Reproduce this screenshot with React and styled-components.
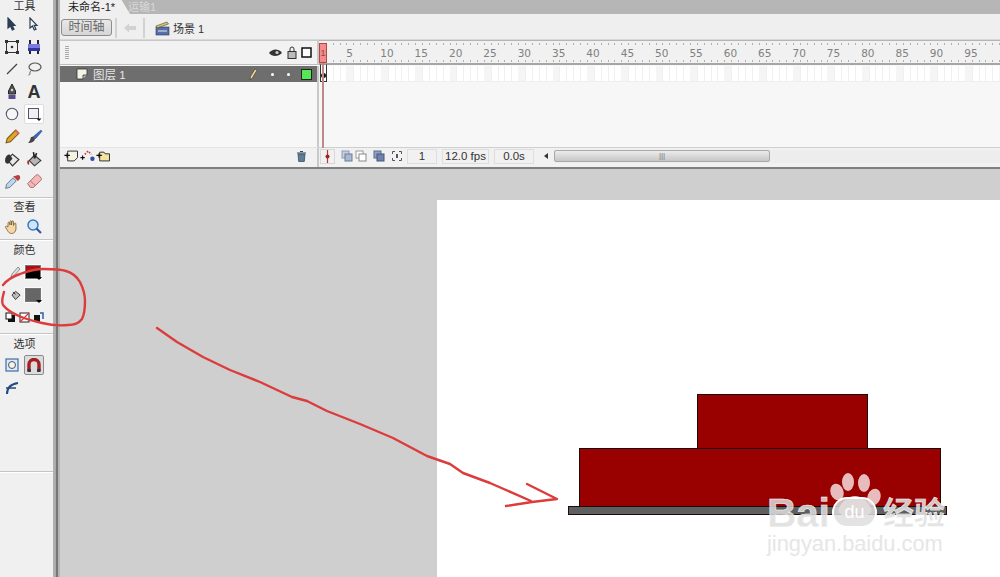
import React from "react"
import styled, { createGlobalStyle } from "styled-components"

const GlobalStyle = createGlobalStyle`
  html, body {
    margin: 0;
    padding: 0;
    background: #cfcfcf;
  }
  body {
    font-family: "Liberation Sans", "Noto Sans CJK SC", sans-serif;
    overflow: hidden;
  }
`

const Page = styled.div`
  position: relative;
  display: flex;
  width: 1000px;
  height: 577px;
  overflow: hidden;
`

const ToolBar = styled.div`
  width: 53px;
  flex: none;
  background: #f0f0f0;
  display: flex;
  flex-direction: column;
`

const Splitter = styled.div`
  width: 7px;
  flex: none;
  background: linear-gradient(90deg, #b3b3b3 0, #a8a8a8 3px, #767676 3px, #767676 5px, #b4b4b4 5px);
`

const ToolTitle = styled.div`
  height: ${props => props.$h}px;
  padding-right: 4px;
  font-size: 11px;
  line-height: ${props => props.$h}px;
  text-align: center;
  color: #333;
`

const ToolGrid = styled.div`
  display: grid;
  grid-template-columns: 22px 22px;
  grid-auto-rows: ${props => props.$rowH || 22.5}px;
  padding-left: 1px;
  justify-items: center;
  align-items: center;
`

const ToolSep = styled.div`
  height: 2px;
  margin-top: ${props => props.$mt || 0}px;
  background: linear-gradient(#c4c4c4 50%, #fff 50%);
`

const ToolSlot = styled.div`
  width: 20px;
  height: 20px;
  display: flex;
  align-items: center;
  justify-content: center;
  box-sizing: border-box;
  border-radius: 2px;
  background: ${props => (props.$pressed ? "#dcdcdc" : props.$active ? "#fff" : "transparent")};
  border: 1px solid ${props => (props.$pressed ? "#8b8b8b" : props.$active ? "#ddd" : "transparent")};
`

const TextTool = styled.span`
  font-size: 18px;
  font-weight: 700;
  line-height: 16px;
  color: #333;
`

const ColorRow = styled.div`
  height: ${props => props.$h}px;
  display: flex;
  align-items: center;
  gap: ${props => props.$gap || 4}px;
  padding-left: ${props => props.$pl || 9}px;
`

const Swatch = styled.div`
  position: relative;
  width: 16px;
  height: 14px;
  box-sizing: border-box;
  border: 1px solid #777;
  box-shadow: 0 0 0 1px #fafafa;
  background: ${props => props.$fill};
  &::after {
    content: "";
    position: absolute;
    right: -2px;
    bottom: -2px;
    border: 3px solid transparent;
    border-top: 3px solid #000;
    border-bottom: 0;
  }
`

const Main = styled.div`
  flex: 1;
  display: flex;
  flex-direction: column;
  min-width: 0;
`

const TabBar = styled.div`
  height: 14px;
  flex: none;
  background: #b6b6b6;
  display: flex;
  overflow: hidden;
`

const ActiveTab = styled.div`
  width: 56px;
  padding: 0 6px 0 8px;
  font-size: 11px;
  line-height: 14px;
  color: #222;
  background: #efefef;
  clip-path: polygon(0 0, 88% 0, 100% 100%, 0 100%);
`

const OtherTab = styled.div`
  margin-left: -2px;
  font-size: 11px;
  line-height: 14px;
  color: #d8d8d8;
`

const EditBar = styled.div`
  height: 26px;
  flex: none;
  background: #efefef;
  display: flex;
  align-items: center;
  padding: 2px 0 0 1px;
  border-bottom: 1px solid #d8d8d8;
  box-sizing: border-box;
`

const TimelineButton = styled.div`
  width: 51px;
  height: 17px;
  box-sizing: border-box;
  border: 1px solid #8c8c8c;
  border-radius: 3px;
  background: linear-gradient(#e8e8e8, #d6d6d6);
  color: #666;
  font-size: 12px;
  line-height: 15px;
  text-align: center;
`

const BarSep = styled.div`
  width: 2px;
  height: 20px;
  margin: 0 ${props => props.$mx || 6}px;
  background: #d2d2d2;
`

const BackArrow = styled.svg`
  margin-left: 3px;
`

const Clapper = styled.svg`
  margin-left: 4px;
`

const SceneLabel = styled.span`
  font-size: 11px;
  color: #333;
  margin-left: 3px;
`

const Timeline = styled.div`
  height: 127px;
  flex: none;
  display: grid;
  grid-template-columns: 259px 1fr;
  grid-template-rows: 25px 17px 1fr 20px;
  background: #f7f7f7;
  border-bottom: 2px solid #7f7f7f;
  box-sizing: content-box;
`

const LayerHead = styled.div`
  background: #f2f2f2;
  border-top: 1px solid #c8c8c8;
  border-bottom: 1px solid #bdbdbd;
  border-right: 2px solid #c9c9c9;
  box-sizing: border-box;
  display: flex;
  align-items: center;
  justify-content: flex-end;
  padding: 0 5px 0 5px;
  gap: 4px;
`

const Grip = styled.div`
  width: 4px;
  height: 14px;
  margin-right: auto;
  background: repeating-linear-gradient(#aaa 0 1px, transparent 1px 2px);
`

const LayerRow = styled.div`
  margin-top: 1px;
  background: #6e6e6e;
  border-right: 2px solid #c9c9c9;
  display: flex;
  align-items: center;
  padding: 0 5px 0 16px;
  color: #e6e6e6;
  font-size: 11.5px;
`

const LayerName = styled.span`
  margin-left: 5px;
  margin-right: auto;
`

const LayerDot = styled.span`
  width: 3px;
  height: 3px;
  margin-left: 13px;
  border-radius: 50%;
  background: #fff;
`

const LayerColor = styled.span`
  width: 9px;
  height: 9px;
  margin-left: 11px;
  border: 1px solid #222;
  background: #55e655;
`

const Ruler = styled.div`
  position: relative;
  background: #f1f1f1;
  border-top: 1px solid #b4b4b4;
  border-bottom: 2px solid #a6a6a6;
  box-sizing: border-box;
  overflow: hidden;
  &::before,
  &::after {
    content: "";
    position: absolute;
    left: 0;
    right: 0;
    height: 2px;
    background: repeating-linear-gradient(90deg, #b0b0b0 0 1px, transparent 1px 6.87px);
  }
  &::before {
    top: 2px;
  }
  &::after {
    bottom: 1px;
  }
`

const RulerNum = styled.span`
  position: absolute;
  top: 5px;
  width: 24px;
  margin-left: -12px;
  text-align: center;
  font-family: "DejaVu Sans", sans-serif;
  font-size: 10.5px;
  line-height: 14px;
  color: #808080;
`

const Playhead = styled.div`
  position: absolute;
  left: 319px;
  top: 43px;
  width: 8px;
  height: 20px;
  box-sizing: border-box;
  background: #f58b8b;
  border: 1px solid #b04848;
  color: #8a4a4a;
  font-size: 9px;
  line-height: 18px;
  text-align: center;
`

const PlayLine = styled.div`
  position: absolute;
  left: 322px;
  top: 63px;
  width: 2px;
  height: 85px;
  background: #bd8a8a;
`

const Frames = styled.div`
  position: relative;
  margin-top: 1px;
  background-color: #fff;
  background-image:
    repeating-linear-gradient(90deg, transparent 0 27.48px, #f5f5f5 27.48px 34.35px),
    repeating-linear-gradient(90deg, #f0f0f0 0 1px, transparent 1px 6.87px);
  border-bottom: 1px solid #efefef;
  box-sizing: border-box;
`

const KeyFrame = styled.div`
  position: absolute;
  left: 1px;
  top: -2px;
  width: 7px;
  height: 18px;
  box-sizing: border-box;
  border: 1px solid #333;
  border-top-color: #999;
  background: #fff;
  &::after {
    content: "";
    position: absolute;
    left: 0;
    bottom: 3px;
    width: 5px;
    height: 5px;
    border-radius: 50%;
    background: #111;
  }
`

const EmptyLeft = styled.div`
  background: #f7f7f7;
  border-right: 2px solid #c9c9c9;
`

const EmptyRight = styled.div`
  background: #f7f7f7;
`

const LayerTools = styled.div`
  background: #f1f1f1;
  border-top: 1px solid #e4e4e4;
  border-right: 2px solid #c9c9c9;
  display: flex;
  align-items: center;
  padding: 0 10px 3px 4px;
  gap: 1px;
`

const FrameTools = styled.div`
  background: #f1f1f1;
  border-top: 1px solid #cfcfcf;
  display: flex;
  align-items: center;
  padding: 0 0 3px 1px;
  font-size: 11.5px;
  color: #333;
`

const ToolPush = styled.div`
  margin-left: auto;
  display: flex;
`

const FrameIcon = styled.div`
  width: 15px;
  height: 15px;
  flex: none;
  display: flex;
  align-items: center;
  justify-content: center;
  box-sizing: border-box;
  margin-left: ${props => props.$ml || 0}px;
  border: 1px solid ${props => (props.$boxed ? "#d8d8d8" : "transparent")};
`

const Counter = styled.div`
  width: ${props => props.$w}px;
  height: 15px;
  flex: none;
  box-sizing: border-box;
  margin-left: ${props => props.$ml}px;
  border: 1px solid #dedede;
  line-height: 13px;
  text-align: center;
`

const ScrollArrow = styled.div`
  width: 0;
  height: 0;
  margin: 0 6px 0 10px;
  border: 3px solid transparent;
  border-left: 0;
  border-right: 4px solid #333;
`

const ScrollTrack = styled.div`
  flex: 1;
  height: 13px;
  background: #ededed;
`

const ScrollThumb = styled.div`
  width: 216px;
  height: 12px;
  box-sizing: border-box;
  border: 1px solid #a8a8a8;
  border-radius: 2px;
  background: linear-gradient(#ececec, #c6c6c6);
  display: flex;
  align-items: center;
  justify-content: center;
  color: #777;
  font-size: 8px;
  line-height: 8px;
`

const Workspace = styled.div`
  position: relative;
  flex: 1;
  background: #cfcfcf;
  overflow: hidden;
`

const Stage = styled.div`
  position: absolute;
  left: 377px;
  top: 31px;
  right: 0;
  bottom: 0;
  background: #fff;
`

const Shape = styled.div`
  position: absolute;
  left: ${props => props.$x}px;
  top: ${props => props.$y}px;
  width: ${props => props.$w}px;
  height: ${props => props.$h}px;
  box-sizing: border-box;
  border: 1px solid #1f0a0a;
  background: ${props => props.$fill};
`

const Overlay = styled.svg`
  position: absolute;
  left: 0;
  top: 0;
  pointer-events: none;
`

const Watermark = styled.div`
  position: absolute;
  left: 767px;
  top: 470px;
  width: 182px;
  height: 90px;
`

const WmPaw = styled.svg`
  position: absolute;
  left: 50px;
  top: 0;
`

const WmBai = styled.span`
  position: absolute;
  left: 0;
  top: 23px;
  font-size: 41px;
  line-height: 40px;
  font-weight: 700;
  letter-spacing: -0.5px;
  color: rgba(222, 222, 222, 0.85);
  -webkit-text-stroke: 0.5px #fff;
`

const WmDu = styled.span`
  position: absolute;
  left: 65px;
  top: 27px;
  width: 45px;
  height: 31px;
  border-radius: 15px;
  background: rgba(222, 222, 222, 0.85);
  border: 2px solid #fff;
  box-sizing: border-box;
  font-size: 18px;
  line-height: 27px;
  text-align: center;
  color: #fff;
`

const WmJing = styled.span`
  position: absolute;
  left: 116px;
  top: 29px;
  font-size: 31px;
  line-height: 30px;
  font-weight: 700;
  color: rgba(225, 225, 225, 0.9);
  -webkit-text-stroke: 0.4px #fff;
  white-space: nowrap;
`

const WmUrl = styled.span`
  position: absolute;
  left: 0;
  top: 62px;
  font-size: 21.8px;
  line-height: 24px;
  color: #e6e6e6;
  white-space: nowrap;
`

const Pointer = ({ solid }) => (
  <svg width="14" height="14" viewBox="0 0 14 14">
    <path
      d="M3 1v10l2.500-2 1.800 4 1.700-.8-1.800-3.800H10z"
      fill={solid ? "#2b3d55" : "#f5f5f5"}
      stroke="#2b3d55"
      strokeWidth="1.200"
    />
  </svg>
)

const tools = [
  <Pointer solid />,
  <Pointer />,
  <svg width="16" height="16" viewBox="0 0 16 16">
    <rect x="2.500" y="2.500" width="11" height="11" fill="none" stroke="#333" />
    <rect x="1" y="1" width="3" height="3" fill="#333" />
    <rect x="12" y="1" width="3" height="3" fill="#333" />
    <rect x="1" y="12" width="3" height="3" fill="#333" />
    <rect x="12" y="12" width="3" height="3" fill="#333" />
    <circle cx="8" cy="8" r="1.300" fill="#333" />
  </svg>,
  <svg width="16" height="16" viewBox="0 0 16 16">
    <rect x="2" y="5" width="12" height="7" fill="#7a7ae0" />
    <rect x="2" y="9" width="12" height="3" fill="#3535a0" />
    <path d="M4 1v4M12 1v4M4 12v3M12 12v3" stroke="#223" strokeWidth="2" />
  </svg>,
  <svg width="14" height="14" viewBox="0 0 14 14">
    <path d="M2 12L12 2" stroke="#444" strokeWidth="1.200" />
  </svg>,
  <svg width="16" height="16" viewBox="0 0 16 16">
    <ellipse cx="9" cy="6" rx="6" ry="4" fill="none" stroke="#555" strokeWidth="1.200" />
    <path d="M5.500 9.500c-1 .5-1.800 1.500-1.500 3 .2 1-.8 1.500-1.500 1.500" fill="none" stroke="#555" />
  </svg>,
  <svg width="14" height="17" viewBox="0 0 14 17">
    <path d="M7 1l3.500 7v3h-7V8z" fill="#555" stroke="#222" />
    <circle cx="7" cy="7" r="1.200" fill="#ddd" />
    <rect x="3.500" y="12" width="7" height="4" fill="#5a4a90" />
  </svg>,
  <TextTool>A</TextTool>,
  <svg width="16" height="16" viewBox="0 0 16 16">
    <circle cx="8" cy="8" r="5.700" fill="#f4f6f8" stroke="#556" strokeWidth="1.100" />
  </svg>,
  <svg width="16" height="16" viewBox="0 0 16 16">
    <rect x="2.500" y="2.500" width="10" height="10" fill="#eef0f4" stroke="#556" />
    <path d="M10.500 12.500h5l-2.500 2.500z" fill="#111" />
  </svg>,
  <svg width="17" height="17" viewBox="0 0 16 16">
    <path d="M2 14l1-4 8-8 3 3-8 8z" fill="#e2a62a" stroke="#7a5a1a" />
    <path d="M10 3l3 3 1.500-1.500-3-3z" fill="#e06a60" />
  </svg>,
  <svg width="17" height="17" viewBox="0 0 16 16">
    <path d="M14 2L7 8l2 2 6-7z" fill="#3a6ac8" stroke="#24447a" strokeWidth=".6" />
    <path d="M7 8c-2 0-3 1-3 3-.3 1-1 2-2 3 3 0 6-1 6.500-4z" fill="#444" />
  </svg>,
  <svg width="17" height="17" viewBox="0 0 16 16">
    <path d="M3 8l5-5 6 5-6 6z" fill="#e8e8e8" stroke="#333" strokeWidth="1.100" />
    <path d="M1 9c0-3 1-5 4-6l3 4-4 5c-2 0-3-1-3-3z" fill="#333" />
  </svg>,
  <svg width="17" height="17" viewBox="0 0 16 16">
    <path d="M3 9l5-5 6 5-6 5z" fill="#b5b5b5" stroke="#333" />
    <path d="M7 1l1 6M10 2L8 7" stroke="#222" strokeWidth="1.500" />
    <path d="M1.500 9c-1 2 0 4 1.500 4V9z" fill="#a33" />
  </svg>,
  <svg width="17" height="17" viewBox="0 0 16 16">
    <path d="M1.500 14.500l1-4 6-6 3 3-6 6z" fill="#bcd6ee" stroke="#5a6a80" strokeWidth=".8" />
    <path d="M8.500 3l4.500 4.500 1.500-1.500c1-1 1-2.500.2-3.500s-2.500-.8-3.500.2z" fill="#b84040" />
  </svg>,
  <svg width="17" height="17" viewBox="0 0 16 16">
    <path d="M1.500 10l8-8c.8-.7 1.500-.5 2.500.3l2 1.900c.8.900.8 1.800 0 2.600L7 13.500H4z" fill="#f5b8b8" stroke="#a66" strokeWidth=".9" />
    <path d="M4 7.500l4.500 4" stroke="#a66" strokeWidth=".8" />
  </svg>,
]

const frameNumbers = Array.from({ length: 19 }, (_, i) => (i + 1) * 5)

// the single digit 5 sits a little left of the even 34.35px step
const rulerLeft = i => (i === 0 ? 30.7 : 33.6 + i * 34.35)

function App() {
  return (
    <Page>
      <GlobalStyle />
      <ToolBar>
        <ToolTitle $h={13}>工具</ToolTitle>
        <ToolGrid>
          {tools.map((icon, i) => (
            <ToolSlot key={i} $active={i === 9}>
              {icon}
            </ToolSlot>
          ))}
        </ToolGrid>
        <ToolSep $mt={4} />
        <ToolTitle $h={17}>查看</ToolTitle>
        <ToolGrid $rowH={21}>
          <ToolSlot>
            <svg width="17" height="17" viewBox="0 0 17 17">
              <path
                d="M4 9V5c0-1 1.400-1 1.500 0l.5 2V3.500c0-1 1.500-1 1.500 0V7l.5-3.500c.1-1 1.500-.8 1.500.2V7.500l1-2c.4-.8 1.600-.4 1.400.5L12 11c-.5 3-2 4.500-4.500 4.500-2 0-3-1.200-4-3L1.500 9.500c-.5-1 .8-1.800 1.500-1z"
                fill="#f2d7a8"
                stroke="#7a5a2a"
                strokeWidth=".8"
              />
            </svg>
          </ToolSlot>
          <ToolSlot>
            <svg width="17" height="17" viewBox="0 0 17 17">
              <circle cx="7" cy="7" r="5" fill="#cfe6fa" stroke="#3a78c0" strokeWidth="1.500" />
              <path d="M10.500 10.500L15 15" stroke="#33589a" strokeWidth="2.200" />
            </svg>
          </ToolSlot>
        </ToolGrid>
        <ToolSep $mt={2} />
        <ToolTitle $h={19}>颜色</ToolTitle>
        <ColorRow $h={23} $pl={10} $gap={4}>
          <svg width="11" height="12" viewBox="0 0 11 12">
            <path d="M1 11l1-3 6-7 2 2-6 7z" fill="#ddd" stroke="#777" strokeWidth=".8" />
          </svg>
          <Swatch $fill="linear-gradient(#a11 0 4px, #000 4px)" />
        </ColorRow>
        <ColorRow $h={24} $pl={11} $gap={3}>
          <svg width="11" height="12" viewBox="0 0 12 12">
            <path d="M1 6l4-4 5 4-5 5z" fill="#bbb" stroke="#333" />
            <path d="M2 3l3 2" stroke="#222" />
          </svg>
          <Swatch $fill="#666" />
        </ColorRow>
        <ColorRow $h={20} $pl={5} $gap={3}>
          <svg width="11" height="11" viewBox="0 0 11 11">
            <rect x="3" y="3" width="7" height="7" fill="#111" />
            <rect x="1" y="1" width="6" height="6" fill="#fff" stroke="#111" />
          </svg>
          <svg width="11" height="11" viewBox="0 0 11 11">
            <rect x="1" y="1" width="9" height="9" fill="#fff" stroke="#222" />
            <path d="M1 10l9-9" stroke="#d33" strokeWidth="1.300" />
          </svg>
          <svg width="12" height="12" viewBox="0 0 12 12">
            <rect x="1" y="4" width="6" height="7" fill="#111" />
            <path d="M7 2h3v6" stroke="#2a5fb0" strokeWidth="1.500" fill="none" />
          </svg>
        </ColorRow>
        <ToolSep $mt={6} />
        <ToolTitle $h={19}>选项</ToolTitle>
        <ToolGrid>
          <ToolSlot>
            <svg width="14" height="14" viewBox="0 0 14 14">
              <rect x="1" y="1" width="12" height="12" fill="#dfeaf6" stroke="#3a6ea8" strokeWidth="1.200" />
              <circle cx="7" cy="7" r="3.500" fill="#f2f2f2" stroke="#555" />
            </svg>
          </ToolSlot>
          <ToolSlot $pressed>
            <svg width="14" height="15" viewBox="0 0 14 15">
              <path d="M2 13V6.500a5 5 0 0 1 10 0V13" fill="none" stroke="#a52020" strokeWidth="3.400" />
              <path d="M.5 11h3.400v3H.5zM10.100 11h3.400v3h-3.400z" fill="#334" />
            </svg>
          </ToolSlot>
          <ToolSlot>
            <svg width="15" height="15" viewBox="0 0 15 15">
              <path d="M2 14c0-6 4-10 11-11" fill="none" stroke="#234a80" strokeWidth="2" />
              <path d="M1 8h10" stroke="#234a80" strokeWidth="1.500" />
            </svg>
          </ToolSlot>
        </ToolGrid>
        <ToolSep $mt={72} />
      </ToolBar>
      <Splitter />
      <Main>
        <TabBar>
          <ActiveTab>未命名-1*</ActiveTab>
          <OtherTab>运输1</OtherTab>
        </TabBar>
        <EditBar>
          <TimelineButton>时间轴</TimelineButton>
          <BarSep $mx={3} />
          <BackArrow width="14" height="10" viewBox="0 0 14 10">
            <path d="M1 5l5-4.500V3h7v4H6v2.500z" fill="#d2d2d2" />
          </BackArrow>
          <BarSep $mx={6} />
          <Clapper width="15" height="16" viewBox="0 0 15 16">
            <rect x="1" y="7" width="13" height="8" fill="#5570b0" stroke="#334" strokeWidth=".6" />
            <path d="M1 6l11-4 1.500 2L2 8z" fill="#d8c66a" stroke="#443" strokeWidth=".6" />
            <path d="M3 11h9" stroke="#e8e8e8" />
          </Clapper>
          <SceneLabel>场景 1</SceneLabel>
        </EditBar>
        <Timeline>
          <LayerHead>
            <Grip />
            <svg width="15" height="10" viewBox="0 0 15 10">
              <path d="M1 5c3-4 9-5 13 0-4 4-10 4-13 0z" fill="#333" />
              <circle cx="9" cy="4.500" r="1.600" fill="#ccc" />
            </svg>
            <svg width="10" height="13" viewBox="0 0 10 13">
              <rect x="1" y="5.500" width="8" height="7" fill="#bbb" stroke="#333" />
              <path d="M3 6V3a2 2 0 0 1 4 0v3" fill="none" stroke="#333" />
            </svg>
            <svg width="11" height="11" viewBox="0 0 11 11">
              <rect x="1" y="1" width="9" height="9" fill="#fff" stroke="#111" strokeWidth="1.500" />
            </svg>
          </LayerHead>
          <Ruler>
            {frameNumbers.map((n, i) => (
              <RulerNum key={n} style={{ left: rulerLeft(i) }}>
                {n}
              </RulerNum>
            ))}
          </Ruler>
          <LayerRow>
            <svg width="12" height="12" viewBox="0 0 12 12">
              <path d="M1 1h10v6l-4 4H1z" fill="#f5f3e4" stroke="#333" strokeWidth=".8" />
              <path d="M7 11V7h4" fill="#bbb" stroke="#333" strokeWidth=".8" />
            </svg>
            <LayerName>图层 1</LayerName>
            <svg width="9" height="13" viewBox="0 0 9 13">
              <path d="M1 12l.5-3.500L6 1l2 1.200-4.500 7.500z" fill="#f0d890" stroke="#333" strokeWidth=".6" />
            </svg>
            <LayerDot />
            <LayerDot />
            <LayerColor />
          </LayerRow>
          <Frames>
            <KeyFrame />
          </Frames>
          <EmptyLeft />
          <EmptyRight />
          <LayerTools>
            <svg width="15" height="12" viewBox="0 0 13 11">
              <path d="M3 1h9v6l-3 3H3z" fill="#f4f2e0" stroke="#333" strokeWidth=".9" />
              <path d="M0 5h5M2.500 3v4" stroke="#111" strokeWidth="1.200" />
            </svg>
            <svg width="15" height="12" viewBox="0 0 13 11">
              <path d="M0 7h4M2 5v4" stroke="#111" strokeWidth="1.100" />
              <path d="M4 4l3-3 3 3" fill="none" stroke="#c33" strokeWidth="1.400" strokeDasharray="1.500 1.200" />
              <circle cx="11" cy="8" r="2" fill="#2a4fa0" />
            </svg>
            <svg width="15" height="12" viewBox="0 0 13 11">
              <path d="M3 2h4l1 1.500h4V10H3z" fill="#f2e3a0" stroke="#333" strokeWidth=".9" />
              <path d="M0 5h5M2.500 3v4" stroke="#111" strokeWidth="1.200" />
            </svg>
            <ToolPush>
              <svg width="11" height="12" viewBox="0 0 11 12">
                <path d="M2 4h7l-.7 7.500H2.700z" fill="#5e7d96" stroke="#2d4558" strokeWidth=".7" />
                <path d="M1 3h9M4 1.500h3" stroke="#2d4558" strokeWidth="1.100" />
              </svg>
            </ToolPush>
          </LayerTools>
          <FrameTools>
            <FrameIcon $boxed>
              <svg width="11" height="13" viewBox="0 0 11 13">
                <path d="M5.500 0v13" stroke="#b43a3a" strokeWidth="1.200" />
                <circle cx="5.500" cy="6.500" r="2" fill="#a01f1f" />
              </svg>
            </FrameIcon>
            <FrameIcon $ml={4}>
              <svg width="12" height="12" viewBox="0 0 12 12">
                <rect x="1" y="1" width="7" height="7" fill="#c4cfe0" stroke="#8a9ab5" />
                <rect x="4" y="4" width="7" height="7" fill="#a9b8d0" stroke="#6d7c98" />
              </svg>
            </FrameIcon>
            <FrameIcon $ml={-1}>
              <svg width="12" height="12" viewBox="0 0 12 12">
                <rect x="1" y="1" width="7" height="7" fill="#fff" stroke="#9a9a9a" />
                <rect x="4" y="4" width="7" height="7" fill="#fff" stroke="#8a8a8a" />
              </svg>
            </FrameIcon>
            <FrameIcon $ml={3}>
              <svg width="12" height="12" viewBox="0 0 12 12">
                <rect x="1" y="1" width="7" height="7" fill="#8fa2c4" stroke="#5d6c88" />
                <rect x="4" y="4" width="7" height="7" fill="#6d83ad" stroke="#44557a" />
              </svg>
            </FrameIcon>
            <FrameIcon $ml={3}>
              <svg width="12" height="12" viewBox="0 0 12 12">
                <path d="M4 1.500H1.500V4M8 1.500h2.500V4M4 10.500H1.500V8M8 10.500h2.500V8" fill="none" stroke="#555" />
                <rect x="5" y="4" width="2" height="4" fill="#556" />
              </svg>
            </FrameIcon>
            <Counter $w={30} $ml={3}>1</Counter>
            <Counter $w={47} $ml={5}>12.0 fps</Counter>
            <Counter $w={40} $ml={5}>0.0s</Counter>
            <ScrollArrow />
            <ScrollTrack>
              <ScrollThumb>|||</ScrollThumb>
            </ScrollTrack>
          </FrameTools>
        </Timeline>
        <Workspace>
          <Stage />
        </Workspace>
      </Main>
      <Playhead>1</Playhead>
      <PlayLine />
      <Shape $x={697} $y={394} $w={171} $h={55} $fill="#990000" />
      <Shape $x={579} $y={448} $w={362} $h={59} $fill="#990000" />
      <Shape $x={568} $y={506} $w={379} $h={9} $fill="#5f5f5f" />
      <Watermark>
        <WmPaw width="70" height="50" viewBox="0 0 70 50">
          <g fill="#e8bcbc">
            <ellipse cx="20" cy="22" rx="6.500" ry="8.500" transform="rotate(-20 20 22)" />
            <ellipse cx="31" cy="12" rx="6" ry="9" />
            <ellipse cx="47" cy="13" rx="6" ry="9" />
            <ellipse cx="57" cy="27" rx="6.500" ry="8.500" transform="rotate(20 57 27)" />
            <path d="M22 38c3-6 9-12 16-12s13 6 16 12c2 5-3 8-8 7-5-1-11-1-16 0-5 1-10-2-8-7z" />
          </g>
        </WmPaw>
        <WmBai>Bai</WmBai>
        <WmDu>du</WmDu>
        <WmJing>经验</WmJing>
        <WmUrl>jingyan.baidu.com</WmUrl>
      </Watermark>
      <Overlay width="1000" height="577" viewBox="0 0 1000 577">
        <g fill="none" stroke="#dc3c3c" strokeWidth="2.400" strokeLinecap="round" strokeLinejoin="round">
          <path d="M3 285C8 279 14 276 20 274C28 271 36 269 44 269C52 269 60 269 66 271C73 273 77 277 80 282C83 288 85 294 85 301C85 309 84 315 82 319C79 323 74 325 68 325C58 326 50 325 42 323C33 321 26 319 19 316C12 313 6 309 3 305C1 301 3 296 4 292" />
          <path d="M157 328L177 342L203 357L230 370L260 382L292 397L307 401L327 411L360 424L393 438L427 456L450 464L463 473L490 483L531 501" />
          <path d="M527 484L557 499L532 502L506 506" />
        </g>
      </Overlay>
    </Page>
  )
}

export default App
